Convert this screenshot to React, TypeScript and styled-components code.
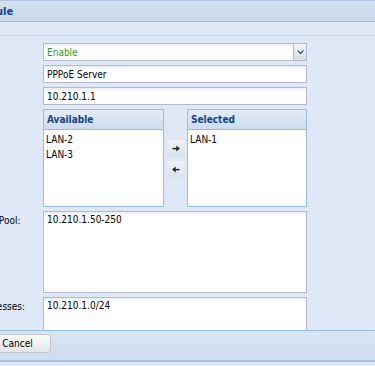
import styled, { createGlobalStyle } from "styled-components";

const GlobalStyle = createGlobalStyle`
  html, body {
    margin: 0;
    padding: 0;
  }
  body {
    width: 375px;
    height: 366px;
    overflow: hidden;
    background: #dfe8f6;
    font-family: "DejaVu Sans Condensed", "DejaVu Sans", sans-serif;
    font-size: 10px;
    color: #000;
  }
`;

const FONT = `"DejaVu Sans Condensed", "DejaVu Sans", sans-serif`;

const Viewport = styled.div`
  width: 375px;
  height: 366px;
  overflow: hidden;
`;

const Window = styled.div`
  margin-left: -140px;
  width: 560px;
  height: 366px;
  display: flex;
  flex-direction: column;
  background: #dfe8f6;
  border-top: 1px solid #b4c7df;
  box-sizing: border-box;
`;

const Header = styled.div`
  flex: none;
  height: 20px;
  display: flex;
  align-items: center;
  padding-left: 24px;
  background: linear-gradient(#d3e0ef, #cad9ec);
  border-bottom: 1px solid #99bbe8;
  color: #15428b;
  font-weight: bold;
  font-size: 11px;
  font-family: ${FONT};
  white-space: nowrap;
`;

const Band = styled.div`
  flex: none;
  height: 13px;
  background: #dfe8f6;
  border-bottom: 1px solid #c9d7e9;
`;

const Body = styled.div`
  flex: 1;
  min-height: 0;
  overflow: hidden;
  padding: 7px 0 0 99px;
  display: flex;
  flex-direction: column;
  gap: 4px;
`;

const Row = styled.div`
  display: flex;
  align-items: flex-start;
  flex: none;
`;

const Label = styled.label`
  width: 84px;
  flex: none;
  padding-top: 4px;
  white-space: nowrap;
  overflow: hidden;
`;

const Field = styled.div`
  width: 264px;
  flex: none;
`;

const Input = styled.input<{ $color?: string }>`
  display: block;
  width: 100%;
  height: 18px;
  box-sizing: border-box;
  margin: 0;
  border: 1px solid #b5b8c8;
  background: #fff linear-gradient(#e9eef5, #fff 4px);
  padding: 0 3px;
  font-family: ${FONT};
  font-size: 10px;
  color: ${(p) => p.$color || "#000"};
  outline: none;
`;

const Combo = styled.div`
  display: flex;
  height: 18px;
`;

const Trigger = styled.div`
  width: 13px;
  flex: none;
  box-sizing: border-box;
  border: 1px solid #b5b8c8;
  border-left: none;
  background: linear-gradient(#f3f5f8, #d9dee6);
  display: flex;
  align-items: center;
  justify-content: center;
`;

const TextArea = styled.textarea<{ $height: number }>`
  display: block;
  width: 100%;
  height: ${(p) => p.$height}px;
  box-sizing: border-box;
  margin: 0;
  border: 1px solid #b5b8c8;
  background: #fff linear-gradient(#e9eef5, #fff 4px);
  padding: 2px 3px;
  font-family: ${FONT};
  font-size: 10px;
  resize: none;
  outline: none;
`;

const Lists = styled.div`
  display: flex;
  height: 98px;
`;

const ListPanel = styled.div<{ $width: number }>`
  width: ${(p) => p.$width}px;
  flex: none;
  box-sizing: border-box;
  border: 1px solid #99bbe8;
  background: #fff;
  display: flex;
  flex-direction: column;
`;

const ListHeader = styled.div`
  height: 20px;
  flex: none;
  box-sizing: border-box;
  border-bottom: 1px solid #99bbe8;
  background: linear-gradient(#e3ecf7, #cddcef);
  color: #15428b;
  font-weight: bold;
  padding-left: 3px;
  line-height: 19px;
`;

const ListItems = styled.ul`
  list-style: none;
  margin: 0;
  padding: 2px 0 0;
`;

const ListItem = styled.li`
  height: 15px;
  line-height: 15px;
  padding-left: 2px;
`;

const Mover = styled.div`
  flex: 1;
  display: flex;
  flex-direction: column;
  align-items: center;
  padding-top: 31px;
  gap: 4px;
`;

const ArrowButton = styled.button`
  width: 18px;
  height: 17px;
  padding: 0;
  border: none;
  border-radius: 2px;
  background: linear-gradient(#eef1f5, #dce2ea);
  display: flex;
  align-items: center;
  justify-content: center;
`;

const Footer = styled.div`
  flex: none;
  height: 26px;
  border-top: 1px solid #99bbe8;
  border-bottom: 2px solid #a8c0df;
  background: linear-gradient(#dae5f3, #cfdcee);
  display: flex;
  align-items: flex-start;
  padding: 3px 0 0 53px;
  gap: 4px;
  box-sizing: content-box;
`;

const BottomStrip = styled.div`
  flex: none;
  height: 4px;
  background: #dfe8f6;
`;

const Button = styled.button`
  width: 67px;
  height: 19px;
  padding: 0;
  border: 1px solid #c2c7cf;
  border-radius: 3px;
  background: linear-gradient(#fafafa, #e4e6ea);
  font-family: ${FONT};
  font-size: 10px;
  color: #000;
`;

const Arrow = ({ dir }: { dir: "right" | "left" }) => (
  <svg width="8" height="7" viewBox="0 0 8 7">
    <g transform={dir === "left" ? "translate(8,0) scale(-1,1)" : undefined}>
      <rect x="0.5" y="2.9" width="4.5" height="1.4" fill="#222" />
      <path d="M4.3 0.6 L7.9 3.6 L4.3 6.6 Z" fill="#222" />
    </g>
  </svg>
);

const available = ["LAN-2", "LAN-3"];
const selected = ["LAN-1"];

export default function App() {
  return (
    <>
      <GlobalStyle />
      <Viewport>
        <Window>
          <Header>Edit PPPoE Server Rule</Header>
          <Band />
          <Body>
            <Row>
              <Label>Status:</Label>
              <Field>
                <Combo>
                  <Input readOnly defaultValue="Enable" $color="#2b9a2b" />
                  <Trigger>
                    <svg width="7" height="5" viewBox="0 0 7 5">
                      <path d="M0 0.5 L3.5 4.5 L7 0.5 L5.4 0.5 L3.5 2.7 L1.6 0.5 Z" fill="#1f3f74" />
                    </svg>
                  </Trigger>
                </Combo>
              </Field>
            </Row>
            <Row>
              <Label>Name:</Label>
              <Field>
                <Input readOnly defaultValue="PPPoE Server" />
              </Field>
            </Row>
            <Row>
              <Label>IP:</Label>
              <Field>
                <Input readOnly defaultValue="10.210.1.1" />
              </Field>
            </Row>
            <Row>
              <Label>Ports:</Label>
              <Field>
                <Lists>
                  <ListPanel $width={121}>
                    <ListHeader>Available</ListHeader>
                    <ListItems>
                      {available.map((i) => (
                        <ListItem key={i}>{i}</ListItem>
                      ))}
                    </ListItems>
                  </ListPanel>
                  <Mover>
                    <ArrowButton>
                      <Arrow dir="right" />
                    </ArrowButton>
                    <ArrowButton>
                      <Arrow dir="left" />
                    </ArrowButton>
                  </Mover>
                  <ListPanel $width={120}>
                    <ListHeader>Selected</ListHeader>
                    <ListItems>
                      {selected.map((i) => (
                        <ListItem key={i}>{i}</ListItem>
                      ))}
                    </ListItems>
                  </ListPanel>
                </Lists>
              </Field>
            </Row>
            <Row>
              <Label>Client IP Pool:</Label>
              <Field>
                <TextArea $height={82} readOnly defaultValue="10.210.1.50-250" />
              </Field>
            </Row>
            <Row>
              <Label>Src Addresses:</Label>
              <Field>
                <TextArea $height={60} readOnly defaultValue="10.210.1.0/24" />
              </Field>
            </Row>
          </Body>
          <Footer>
            <Button>Save</Button>
            <Button>Cancel</Button>
          </Footer>
          <BottomStrip />
        </Window>
      </Viewport>
    </>
  );
}
